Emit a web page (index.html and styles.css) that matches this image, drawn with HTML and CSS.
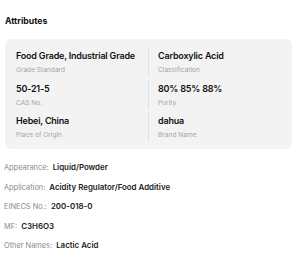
FILE: index.html
```html
<!DOCTYPE html>
<html lang="en">
<head>
    <meta charset="UTF-8">
    <meta name="viewport" content="width=device-width, initial-scale=1.0">
    <title>Attributes</title>
    <link rel="stylesheet" href="styles.css">
</head>
<body>
    <div class="attributes">
        <h3 class="title">Attributes</h3>

        <!-- key attributes card -->
        <div class="card">
            <div class="row">
                <div class="cell">
                    <div class="value">Food Grade, Industrial Grade</div>
                    <div class="label">Grade Standard</div>
                </div>
                <div class="cell">
                    <div class="value">Carboxylic Acid</div>
                    <div class="label">Classification</div>
                </div>
            </div>
            <div class="row">
                <div class="cell">
                    <div class="value">50-21-5</div>
                    <div class="label">CAS No.</div>
                </div>
                <div class="cell">
                    <div class="value">80% 85% 88%</div>
                    <div class="label">Purity</div>
                </div>
            </div>
            <div class="row">
                <div class="cell">
                    <div class="value">Hebei, China</div>
                    <div class="label">Place of Origin</div>
                </div>
                <div class="cell">
                    <div class="value">dahua</div>
                    <div class="label">Brand Name</div>
                </div>
            </div>
        </div>

        <!-- other attributes -->
        <ul class="props">
            <li><span class="key">Appearance:</span><span class="val">Liquid/Powder</span></li>
            <li><span class="key">Application:</span><span class="val">Acidity Regulator/Food Additive</span></li>
            <li><span class="key">EINECS No.:</span><span class="val">200-018-0</span></li>
            <li><span class="key">MF:</span><span class="val">C3H6O3</span></li>
            <li><span class="key">Other Names:</span><span class="val">Lactic Acid</span></li>
        </ul>
    </div>
</body>
</html>
```

FILE: styles.css
```css
body {
    margin: 0;
    padding: 0;
    font-family: Inter, "Noto Sans", Arial, sans-serif;
    background-color: #ffffff;
    color: #222;
}

.attributes {
    padding: 15px 8px 0 5px;
}

.title {
    margin: 0 0 12px 0;
    font-size: 8.7px;
    font-weight: 700;
    color: #111;
    line-height: 12px;
}

.card {
    background-color: #f3f3f3;
    border-radius: 6px;
    padding: 9px 0 8px 11px;
}

.row {
    display: grid;
    grid-template-columns: 132px 1fr;
    margin-bottom: 4.5px;
}

.row:last-child {
    margin-bottom: 0;
}

.cell {
    padding-top: 1px;
}

.cell + .cell {
    border-left: 1px solid #e0e0e0;
    padding-left: 9px;
}

.value {
    font-size: 9px;
    letter-spacing: -0.2px;
    font-weight: 600;
    color: #111;
    line-height: 13px;
}

.label {
    font-size: 6.6px;
    color: #a3a3a3;
    line-height: 11px;
    margin-top: 3px;
}

.props {
    list-style: none;
    margin: 13px 0 0 -1px;
    padding: 0;
}

.props li {
    font-size: 7.4px;
    line-height: 10px;
    margin-bottom: 8.5px;
}

.key {
    color: #8a8a8a;
    margin-right: 4px;
}

.val {
    color: #222;
    font-size: 7.9px;
    font-weight: 600;
}
```
